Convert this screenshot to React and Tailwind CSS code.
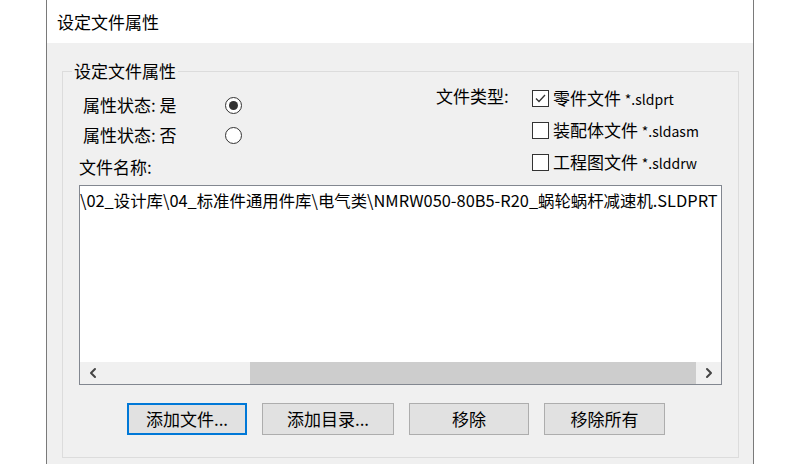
import { ChevronLeft, ChevronRight } from "lucide-react";

const font = { fontFamily: '"Noto Sans CJK SC", "Noto Sans", sans-serif' };

function Radio({ label, checked }) {
  return (
    <div className="flex items-center h-[30px]">
      <span className="w-[142px] text-[17px] leading-[20px]">{label}</span>
      <span className="w-[17px] h-[17px] rounded-full border border-[#333] bg-white flex items-center justify-center">
        {checked && <span className="w-[9px] h-[9px] rounded-full bg-[#333]" />}
      </span>
    </div>
  );
}

function Check({ label, ext, checked }) {
  return (
    <div className="flex items-center h-[32px]">
      <span className="w-[17px] h-[17px] border border-[#333] bg-white flex items-center justify-center">
        {checked && (
          <svg width="13" height="13" viewBox="0 0 13 13">
            <polyline points="2,6.5 5,9.5 11,3" fill="none" stroke="#333" strokeWidth="1.3" />
          </svg>
        )}
      </span>
      <span className="ml-[4px] text-[17px] leading-[20px]">
        {label} <span className="text-[14px]">{ext}</span>
      </span>
    </div>
  );
}

function Button({ children, w, focused }) {
  return (
    <button
      className={`h-[32px] ${w} bg-[#e1e1e1] text-[17px] leading-[20px] text-black ${
        focused ? "border-2 border-[#0078d7]" : "border border-[#adadad]"
      }`}
    >
      {children}
    </button>
  );
}

export default function App() {
  return (
    <div className="w-[800px] h-[464px] bg-white flex pl-[46px] overflow-hidden text-black" style={font}>
      <div className="w-[708px] h-[464px] flex flex-col border-l border-r border-[#7a7a7a]">
        <div className="h-[43px] bg-white flex items-center pl-[10px] text-[17px]">设定文件属性</div>
        <div className="flex-1 bg-[#f0f0f0] pt-[18px] pl-[15px] pr-[14px] pb-[6px]">
          <fieldset className="h-full border border-[#dcdcdc] px-[16px] pb-[10px]">
            <legend className="-ml-[7px] px-[2px] text-[17px] leading-[20px]">设定文件属性</legend>
            <div className="flex h-[76px]">
              <div className="pl-[4px] pt-[9px] w-[357px]">
                <Radio label="属性状态: 是" checked />
                <Radio label="属性状态: 否" />
              </div>
              <div className="flex">
                <span className="w-[96px] text-[17px] leading-[20px] mt-[5px]">文件类型:</span>
                <div className="mt-[1px]">
                  <Check label="零件文件" ext="*.sldprt" checked />
                  <Check label="装配体文件" ext="*.sldasm" />
                  <Check label="工程图文件" ext="*.slddrw" />
                </div>
              </div>
            </div>
            <div className="text-[17px] leading-[20px]">文件名称:</div>
            <div className="mt-[8px] h-[200px] border border-[#828790] bg-white flex flex-col">
              <div className="flex-1 overflow-hidden whitespace-nowrap text-[16.4px] leading-[20px] pt-[4px]">
                \02_设计库\04_标准件通用件库\电气类\NMRW050-80B5-R20_蜗轮蜗杆减速机.SLDPRT
              </div>
              <div className="h-[22px] bg-[#f0f0f0] flex items-center">
                <span className="w-[26px] flex justify-center text-[#444]">
                  <ChevronLeft size={16} strokeWidth={3} />
                </span>
                <span className="ml-[144px] w-[446px] h-[22px] bg-[#cdcdcd]" />
                <span className="flex-1 flex justify-center text-[#444]">
                  <ChevronRight size={16} strokeWidth={3} />
                </span>
              </div>
            </div>
            <div className="flex gap-[15px] pl-[48px] mt-[18px]">
              <Button w="w-[120px]" focused>添加文件...</Button>
              <Button w="w-[132px]">添加目录...</Button>
              <Button w="w-[120px]">移除</Button>
              <Button w="w-[121px]">移除所有</Button>
            </div>
          </fieldset>
        </div>
      </div>
    </div>
  );
}
